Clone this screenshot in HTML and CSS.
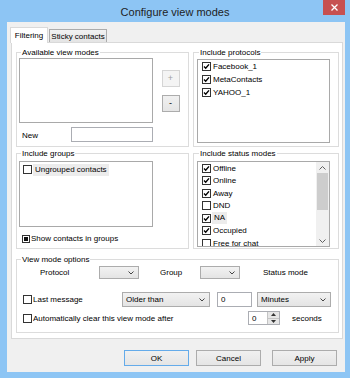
FILE: index.html
```html
<!DOCTYPE html>
<html lang="en">
<head>
  <meta charset="UTF-8">
  <title>Configure view modes</title>
  <link rel="stylesheet" href="styles.css">
</head>
<body>
<div class="window">
  <div class="titlebar">
    <span></span>
    <span class="title">Configure view modes</span>
    <span class="close"><svg width="7" height="7" viewBox="0 0 7 7"><path d="M0.5 0.5 L6.5 6.5 M6.5 0.5 L0.5 6.5" stroke="#fff" stroke-width="1.3"/></svg></span>
  </div>
  <div class="client">
    <div class="tabs">
      <div class="tab active">Filtering</div>
      <div class="tab">Sticky contacts</div>
    </div>
    <div class="pane">

      <fieldset class="group">
        <legend>Available view modes</legend>
        <div class="avail">
          <div class="listbox"></div>
          <div class="pm">
            <span class="btn small disabled">+</span>
            <span class="btn small">-</span>
          </div>
          <div class="newrow">
            <span class="newlabel">New</span>
            <span class="edit newedit"></span>
          </div>
        </div>
      </fieldset>

      <fieldset class="group right">
        <legend>Include protocols</legend>
        <div class="listbox plist">
          <div class="item"><svg class="cb" viewBox="0 0 9 9"><rect x="0.5" y="0.5" width="8" height="8" fill="#fff" stroke="#333"/><path d="M2 4.6 L3.7 6.3 L7 2.4" fill="none" stroke="#000" stroke-width="1.4"/></svg>Facebook_1</div>
          <div class="item"><svg class="cb" viewBox="0 0 9 9"><rect x="0.5" y="0.5" width="8" height="8" fill="#fff" stroke="#333"/><path d="M2 4.6 L3.7 6.3 L7 2.4" fill="none" stroke="#000" stroke-width="1.4"/></svg>MetaContacts</div>
          <div class="item"><svg class="cb" viewBox="0 0 9 9"><rect x="0.5" y="0.5" width="8" height="8" fill="#fff" stroke="#333"/><path d="M2 4.6 L3.7 6.3 L7 2.4" fill="none" stroke="#000" stroke-width="1.4"/></svg>YAHOO_1</div>
        </div>
      </fieldset>

      <fieldset class="group">
        <legend>Include groups</legend>
        <div class="listbox glist">
          <div class="item"><svg class="cb" viewBox="0 0 9 9"><rect x="0.5" y="0.5" width="8" height="8" fill="#fff" stroke="#333"/></svg><span class="hl">Ungrouped contacts</span></div>
        </div>
        <div class="checkrow">
          <svg class="cb small" viewBox="0 0 8 8"><rect x="0.5" y="0.5" width="7" height="7" fill="#fff" stroke="#333"/><rect x="2" y="2" width="4" height="4" fill="#111"/></svg>
          Show contacts in groups
        </div>
      </fieldset>

      <fieldset class="group right">
        <legend>Include status modes</legend>
        <div class="listbox slist">
          <div class="items">
            <div class="item"><svg class="cb" viewBox="0 0 9 9"><rect x="0.5" y="0.5" width="8" height="8" fill="#fff" stroke="#333"/><path d="M2 4.6 L3.7 6.3 L7 2.4" fill="none" stroke="#000" stroke-width="1.4"/></svg>Offline</div>
            <div class="item"><svg class="cb" viewBox="0 0 9 9"><rect x="0.5" y="0.5" width="8" height="8" fill="#fff" stroke="#333"/><path d="M2 4.6 L3.7 6.3 L7 2.4" fill="none" stroke="#000" stroke-width="1.4"/></svg>Online</div>
            <div class="item"><svg class="cb" viewBox="0 0 9 9"><rect x="0.5" y="0.5" width="8" height="8" fill="#fff" stroke="#333"/><path d="M2 4.6 L3.7 6.3 L7 2.4" fill="none" stroke="#000" stroke-width="1.4"/></svg>Away</div>
            <div class="item"><svg class="cb" viewBox="0 0 9 9"><rect x="0.5" y="0.5" width="8" height="8" fill="#fff" stroke="#333"/></svg>DND</div>
            <div class="item"><svg class="cb" viewBox="0 0 9 9"><rect x="0.5" y="0.5" width="8" height="8" fill="#fff" stroke="#333"/><path d="M2 4.6 L3.7 6.3 L7 2.4" fill="none" stroke="#000" stroke-width="1.4"/></svg><span class="hl">NA</span></div>
            <div class="item"><svg class="cb" viewBox="0 0 9 9"><rect x="0.5" y="0.5" width="8" height="8" fill="#fff" stroke="#333"/><path d="M2 4.6 L3.7 6.3 L7 2.4" fill="none" stroke="#000" stroke-width="1.4"/></svg>Occupied</div>
            <div class="item"><svg class="cb" viewBox="0 0 9 9"><rect x="0.5" y="0.5" width="8" height="8" fill="#fff" stroke="#333"/></svg>Free for chat</div>
          </div>
          <div class="scrollbar">
            <span class="arrow"><svg width="7" height="4" viewBox="0 0 7 4"><path d="M0.5 3.5 L3.5 0.5 L6.5 3.5" fill="none" stroke="#606060"/></svg></span>
            <span class="thumb"></span>
            <span class="track"></span>
            <span class="arrow"><svg width="7" height="4" viewBox="0 0 7 4"><path d="M0.5 0.5 L3.5 3.5 L6.5 0.5" fill="none" stroke="#606060"/></svg></span>
          </div>
        </div>
      </fieldset>

      <fieldset class="group options">
        <legend>View mode options</legend>
        <div class="line line1">
          <span class="lbl-protocol">Protocol</span>
          <span class="combo c40"><span></span><svg width="6" height="4" viewBox="0 0 6 4"><path d="M0.5 0.5 L3 3 L5.5 0.5" fill="none" stroke="#444"/></svg></span>
          <span class="lbl-group">Group</span>
          <span class="combo c40"><span></span><svg width="6" height="4" viewBox="0 0 6 4"><path d="M0.5 0.5 L3 3 L5.5 0.5" fill="none" stroke="#444"/></svg></span>
          <span class="lbl-status">Status mode</span>
        </div>
        <div class="line line2">
          <span class="chk chk-short"><svg class="cb" viewBox="0 0 9 9"><rect x="0.5" y="0.5" width="8" height="8" fill="#fff" stroke="#333"/></svg>Last message</span>
          <span class="combo older"><span>Older than</span><svg width="6" height="4" viewBox="0 0 6 4"><path d="M0.5 0.5 L3 3 L5.5 0.5" fill="none" stroke="#444"/></svg></span>
          <span class="edit num">0</span>
          <span class="combo minutes"><span>Minutes</span><svg width="6" height="4" viewBox="0 0 6 4"><path d="M0.5 0.5 L3 3 L5.5 0.5" fill="none" stroke="#444"/></svg></span>
        </div>
        <div class="line line3">
          <span class="chk chk-long"><svg class="cb" viewBox="0 0 9 9"><rect x="0.5" y="0.5" width="8" height="8" fill="#fff" stroke="#333"/></svg>Automatically clear this view mode after</span>
          <span class="spin">
            <span class="spin-val">0</span>
            <span class="spin-btns">
              <span><svg width="5" height="3" viewBox="0 0 5 3"><path d="M0 3 L2.5 0 L5 3 Z" fill="#333"/></svg></span>
              <span><svg width="5" height="3" viewBox="0 0 5 3"><path d="M0 0 L2.5 3 L5 0 Z" fill="#333"/></svg></span>
            </span>
          </span>
          <span class="lbl-seconds">seconds</span>
        </div>
      </fieldset>

    </div>
    <div class="buttons">
      <span class="btn default">OK</span>
      <span class="btn">Cancel</span>
      <span class="btn apply">Apply</span>
    </div>
  </div>
</div>
</body>
</html>
```

FILE: styles.css
```css
* {
  box-sizing: border-box;
}
body {
  margin: 0;
  font-family: "Liberation Sans", Arial, sans-serif;
  font-size: 8px;
  color: #000;
}
.window {
  width: 350px;
  height: 378px;
  background: #8dc5f4;
  display: flex;
  flex-direction: column;
}
.titlebar {
  height: 22px;
  display: grid;
  grid-template-columns: 1fr auto 1fr;
}
.title {
  font-size: 11px;
  line-height: 24px;
  color: #1e1e1e;
}
.close {
  justify-self: end;
  width: 22px;
  height: 15px;
  margin-right: 5px;
  background: #c75050;
  display: flex;
  align-items: center;
  justify-content: center;
}
.client {
  flex: 1;
  margin: 0 5px 6px 7px;
  background: #f0f0f0;
  padding: 5px 2px 0 4px;
}

/* tabs */
.tabs {
  display: flex;
  align-items: flex-end;
  height: 15px;
  margin-left: -1px;
  position: relative;
  z-index: 1;
}
.tab {
  height: 13px;
  width: 58px;
  margin-left: 1px;
  border: 1px solid #acacac;
  border-bottom: none;
  background: linear-gradient(#f2f2f2, #e4e4e4);
  display: flex;
  align-items: center;
  justify-content: center;
  line-height: 11px;
}
.tab.active {
  width: 38px;
  height: 16px;
  margin-left: 0;
  margin-bottom: -1px;
  background: #fff;
  border-color: #d9d9d9;
  padding-bottom: 1px;
}
.pane {
  height: 297px;
  border: 1px solid #d9d9d9;
  background: #fff;
  padding: 4px 3px 0 4px;
  display: grid;
  grid-template-columns: 173px 146px;
  grid-template-rows: 100px 101px 83px;
  column-gap: 4px;
  row-gap: 1px;
}

/* group boxes */
.group {
  margin: 0;
  padding: 0 0 0 2px;
  border: 1px solid #dcdcdc;
  min-width: 0;
}
.group.right {
  padding-left: 3px;
}
.group legend {
  padding: 0 1px;
  margin-left: 2px;
  line-height: 11px;
}
.group.options {
  grid-column: 1 / -1;
  margin-top: 4px;
}
.listbox {
  border: 1px solid #a9a9a9;
  background: #fff;
  overflow: hidden;
}
.item {
  display: flex;
  align-items: center;
  gap: 2px;
  height: 13px;
  white-space: nowrap;
}
.cb {
  width: 9px;
  height: 9px;
  flex: none;
}
.cb.small {
  width: 8px;
  height: 8px;
}
.hl {
  background: #ececec;
  padding: 0 2px;
  margin-left: -1px;
  line-height: 12px;
}

/* available view modes */
.avail {
  display: grid;
  grid-template-columns: 134px 1fr;
  grid-template-rows: 65px 15px;
  row-gap: 4px;
}
.pm {
  display: flex;
  flex-direction: column;
  align-items: center;
  justify-content: center;
  gap: 8px;
}
.newrow {
  display: flex;
  align-items: center;
}
.newlabel {
  width: 52px;
  padding-left: 3px;
  padding-top: 2px;
}
.edit {
  border: 1px solid #abadb3;
  background: #fff;
  display: flex;
  align-items: center;
  padding-left: 3px;
}
.newedit {
  width: 82px;
  height: 15px;
}

.plist {
  width: 133px;
  height: 84px;
  margin-top: 1px;
  padding-left: 4px;
}
.glist {
  width: 134px;
  height: 66px;
  margin-top: 2px;
  padding: 1px 0 0 3px;
}
.checkrow {
  display: flex;
  align-items: center;
  gap: 1px;
  height: 13px;
  margin: 5px 0 0 3px;
}
.slist {
  width: 133px;
  height: 86px;
  margin-top: 2px;
  display: flex;
}
.slist .items {
  flex: 1;
  padding-left: 4px;
}
.slist .item {
  height: 12.5px;
}
.scrollbar {
  width: 13px;
  background: #f0f0f0;
  display: flex;
  flex-direction: column;
  align-items: center;
}
.scrollbar .arrow {
  height: 11px;
  display: flex;
  align-items: center;
}
.scrollbar .thumb {
  width: 11px;
  height: 37px;
  background: #cdcdcd;
}
.scrollbar .track {
  flex: 1;
}

/* view mode options */
.line {
  display: flex;
  align-items: center;
  white-space: nowrap;
}
.line1 {
  height: 13px;
  margin-top: 1px;
  padding-left: 21px;
}
.lbl-protocol {
  width: 59px;
}
.lbl-group {
  width: 40px;
  margin-left: 21px;
}
.lbl-status {
  margin-left: 23px;
}
.combo {
  height: 100%;
  border: 1px solid #acacac;
  background: linear-gradient(#f2f2f2, #e4e4e4);
  display: flex;
  align-items: center;
  justify-content: space-between;
  padding: 0 4px 0 3px;
}
.c40 {
  width: 40px;
}
.line2 {
  height: 15px;
  margin-top: 13px;
  padding-left: 4px;
}
.chk {
  display: flex;
  align-items: center;
  gap: 1px;
}
.chk-short {
  width: 99px;
}
.older {
  width: 88px;
}
.num {
  width: 35px;
  height: 100%;
  margin-left: 7px;
}
.minutes {
  width: 74px;
  margin-left: 5px;
}
.line3 {
  height: 14px;
  margin-top: 4px;
  padding-left: 4px;
}
.chk-long {
  width: 225px;
}
.spin {
  width: 32px;
  height: 100%;
  border: 1px solid #abadb3;
  background: #fff;
  display: flex;
}
.spin-val {
  flex: 1;
  padding-left: 3px;
  display: flex;
  align-items: center;
}
.spin-btns {
  width: 12px;
  display: flex;
  flex-direction: column;
  border-left: 1px solid #c4c4c4;
}
.spin-btns span {
  flex: 1;
  background: #e6e6e6;
  display: flex;
  align-items: center;
  justify-content: center;
}
.spin-btns span + span {
  border-top: 1px solid #c4c4c4;
}
.lbl-seconds {
  margin-left: 12px;
}

/* buttons */
.btn {
  border: 1px solid #acacac;
  background: linear-gradient(#f0f0f0, #e5e5e5);
  display: flex;
  align-items: center;
  justify-content: center;
}
.btn.small {
  width: 18px;
  height: 17px;
  font-size: 9px;
}
.btn.disabled {
  color: #a0a0a0;
  border-color: #d5d5d5;
  background: #f4f4f4;
}
.buttons {
  display: flex;
  justify-content: flex-end;
  gap: 7px;
  margin: 11px 6px 0 0;
}
.buttons .btn {
  width: 65px;
  height: 16px;
}
.btn.default {
  border-color: #64abea;
}
.btn.apply {
  margin-left: 4px;
}
```
